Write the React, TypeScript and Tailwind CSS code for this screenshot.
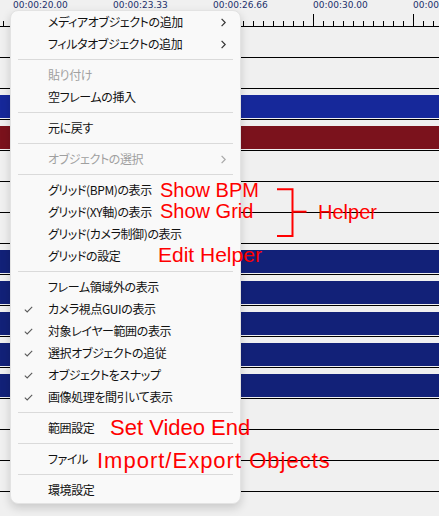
import React from "react";

// ─────────────────────────────────────────────
//  TIMELINE DATA
// ─────────────────────────────────────────────
const labels = ["00:00:20.00", "00:00:23.33", "00:00:26.66", "00:00:30.00", "00:00:33.33"];

const ticks = Array.from({ length: 44 }, (_, i) => 3 + i * 10);

// one entry per layer row, "" = empty layer
const layers = [
  "",
  "",
  "bg-[#16289a]",
  "bg-[#7b121c]",
  "",
  "",
  "",
  "bg-[#122178]",
  "bg-[#122178]",
  "bg-[#122178]",
  "bg-[#122178]",
  "bg-[#122178]",
  "",
  "",
  "",
  "",
];

// ─────────────────────────────────────────────
//  MENU DATA
// ─────────────────────────────────────────────
type Item =
  | { label: string; disabled?: boolean; check?: boolean; sub?: boolean }
  | "sep";

const items: Item[] = [
  { label: "メディアオブジェクトの追加", sub: true },
  { label: "フィルタオブジェクトの追加", sub: true },
  "sep",
  { label: "貼り付け", disabled: true },
  { label: "空フレームの挿入" },
  "sep",
  { label: "元に戻す" },
  "sep",
  { label: "オブジェクトの選択", disabled: true, sub: true },
  "sep",
  { label: "グリッド(BPM)の表示" },
  { label: "グリッド(XY軸)の表示" },
  { label: "グリッド(カメラ制御)の表示" },
  { label: "グリッドの設定" },
  "sep",
  { label: "フレーム領域外の表示" },
  { label: "カメラ視点GUIの表示", check: true },
  { label: "対象レイヤー範囲の表示", check: true },
  { label: "選択オブジェクトの追従", check: true },
  { label: "オブジェクトをスナップ", check: true },
  { label: "画像処理を間引いて表示", check: true },
  "sep",
  { label: "範囲設定" },
  "sep",
  { label: "ファイル" },
  "sep",
  { label: "環境設定" },
];

function Layer({ bar }: { bar: string }) {
  return (
    <div className="h-[31px] shrink-0 border-b border-black pt-[6px]">
      {bar && <div className={`h-[23px] ${bar}`} />}
    </div>
  );
}

function Check() {
  return (
    <svg width="9" height="7" viewBox="0 0 9 7" className="ml-[13px]">
      <polyline points="0.8,3.6 3.2,5.9 8.2,0.9" fill="none" stroke="#5a5a5a" strokeWidth="1.1" />
    </svg>
  );
}

function Chevron({ color }: { color: string }) {
  return (
    <svg width="5" height="9" viewBox="0 0 5 9">
      <polyline points="0.6,0.8 4.2,4.5 0.6,8.2" fill="none" stroke={color} strokeWidth="1.2" />
    </svg>
  );
}

function ContextMenu() {
  return (
    <div className="absolute left-[10px] top-[10px] w-[231px] rounded-lg border border-[#e3e3e3] bg-[#f9f9f9] pb-[2px] shadow-[0_4px_10px_rgba(0,0,0,0.16)] [font-family:'Noto_Sans_CJK_JP',sans-serif] [font-feature-settings:'palt'] text-[12px] tracking-[-0.4px]">
      {items.map((it, i) =>
        it === "sep" ? (
          <div key={i} className="flex h-[9px] items-center px-[7px]">
            <div className="h-px w-full bg-[#dadada]" />
          </div>
        ) : (
          <div
            key={i}
            className={`flex h-[22px] items-center ${it.disabled ? "text-[#a0a0a0]" : "text-[#111]"}`}
          >
            <div className="flex w-[37px] shrink-0 items-center">{it.check && <Check />}</div>
            <span className="flex-1 leading-none">{it.label}</span>
            {it.sub && (
              <div className="mr-[14px] flex items-center">
                <Chevron color={it.disabled ? "#a8a8a8" : "#333"} />
              </div>
            )}
          </div>
        )
      )}
    </div>
  );
}

// red hand-made notes drawn over the screenshot
function Notes() {
  const note = "absolute whitespace-nowrap leading-none text-[#ff0000] [font-family:'Liberation_Sans',Arial,sans-serif]";
  return (
    <>
      <div className={`${note} left-[160px] top-[180px] text-[20px]`}>Show BPM</div>
      <div className={`${note} left-[160px] top-[201px] text-[20px]`}>Show Grid</div>
      <div className={`${note} left-[318px] top-[202px] text-[20px]`}>Helper</div>
      <div className={`${note} left-[158px] top-[244px] text-[21px]`}>Edit Helper</div>
      <div className={`${note} left-[110px] top-[417px] text-[22px]`}>Set Video End</div>
      <div className={`${note} left-[97px] top-[450px] text-[22px] tracking-[1px]`}>Import/Export Objects</div>
      <svg width="32" height="52" viewBox="0 0 32 52" className="absolute left-[276px] top-[187px]">
        <polyline points="1,2.3 16.5,2.3 16.5,49 1,49" fill="none" stroke="#ff0000" strokeWidth="2" />
        <line x1="16.5" y1="24.7" x2="30.5" y2="24.7" stroke="#ff0000" strokeWidth="2" />
      </svg>
    </>
  );
}

export default function App() {
  return (
    <div className="relative h-[516px] w-[439px] overflow-hidden bg-[#f0f0f0]">
      {/* RULER */}
      <div className="flex h-[14px] pl-[13px] pt-[1px] [font-family:'DejaVu_Sans',sans-serif] text-[9px] leading-none text-[#1b2f6b]">
        {labels.map((l) => (
          <div key={l} className="w-[100px] shrink-0">
            {l}
          </div>
        ))}
      </div>
      <svg width="439" height="13" className="block">
        {ticks.map((x) => (
          <line
            key={x}
            x1={x + 0.5}
            x2={x + 0.5}
            y1={(x - 13) % 100 === 0 ? 0 : 7}
            y2={12}
            stroke="#000"
          />
        ))}
        <line x1="0" x2="439" y1="12.5" y2="12.5" stroke="#000" />
      </svg>

      {/* LAYERS */}
      <div className="flex flex-col">
        {layers.map((b, i) => (
          <Layer key={i} bar={b} />
        ))}
      </div>

      <ContextMenu />
      <Notes />
    </div>
  );
}
